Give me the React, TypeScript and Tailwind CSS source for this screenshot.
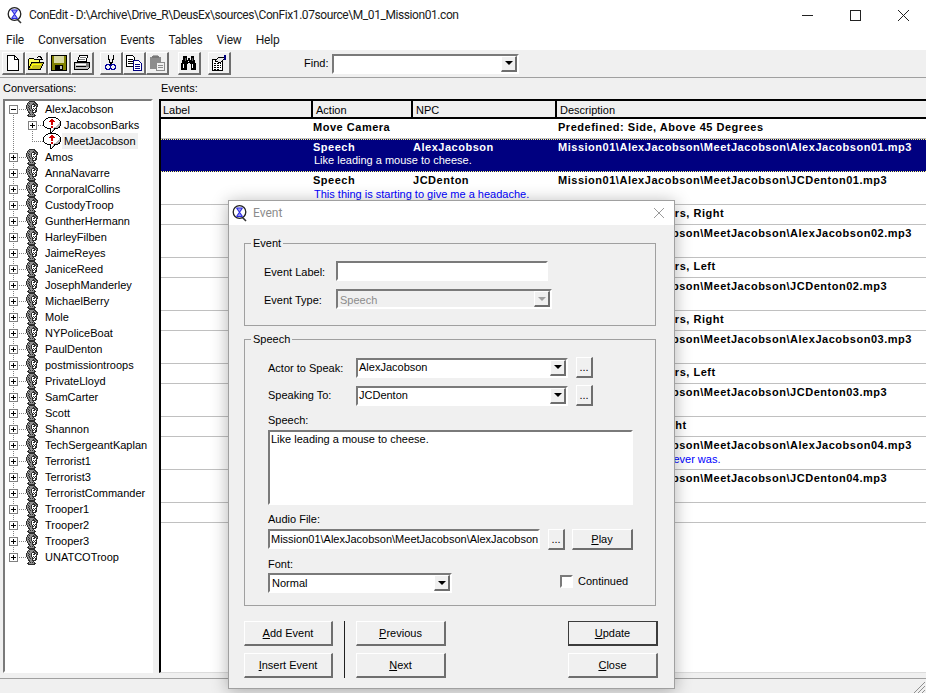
import type { ReactNode } from "react";

const sunken = "border-2 border-t-[#7a7a7a] border-l-[#7a7a7a] border-r-white border-b-white";
const raised = "border border-t-white border-l-white border-r-2 border-b-2 border-r-[#6e6e6e] border-b-[#6e6e6e] bg-[#f0f0f0]";

const actors = [
  "Amos", "AnnaNavarre", "CorporalCollins", "CustodyTroop", "GuntherHermann", "HarleyFilben", "JaimeReyes",
  "JaniceReed", "JosephManderley", "MichaelBerry", "Mole", "NYPoliceBoat", "PaulDenton", "postmissiontroops",
  "PrivateLloyd", "SamCarter", "Scott", "Shannon", "TechSergeantKaplan", "Terrorist1", "Terrorist3",
  "TerroristCommander", "Trooper1", "Trooper2", "Trooper3", "UNATCOTroop",
];

const base = "Mission01\\AlexJacobson\\MeetJacobson\\";

interface EventRow {
  action: string;
  npc?: string;
  desc: string;
  line?: string;
  selected?: boolean;
}

const rows: EventRow[] = [
  { action: "Move Camera", desc: "Predefined: Side, Above 45 Degrees" },
  { action: "Speech", npc: "AlexJacobson", desc: base + "AlexJacobson01.mp3", line: "Like leading a mouse to cheese.", selected: true },
  { action: "Speech", npc: "JCDenton", desc: base + "JCDenton01.mp3", line: "This thing is starting to give me a headache." },
  { action: "Move Camera", desc: "Predefined: Shoulders, Right" },
  { action: "Speech", npc: "AlexJacobson", desc: base + "AlexJacobson02.mp3", line: " " },
  { action: "Move Camera", desc: "Predefined: Shoulders, Left" },
  { action: "Speech", npc: "JCDenton", desc: base + "JCDenton02.mp3", line: " " },
  { action: "Move Camera", desc: "Predefined: Shoulders, Right" },
  { action: "Speech", npc: "AlexJacobson", desc: base + "AlexJacobson03.mp3", line: " " },
  { action: "Move Camera", desc: "Predefined: Shoulders, Left" },
  { action: "Speech", npc: "JCDenton", desc: base + "JCDenton03.mp3", line: " " },
  { action: "Move Camera", desc: "Predefined: Top, Right" },
  { action: "Speech", npc: "AlexJacobson", desc: base + "AlexJacobson04.mp3", line: "You're more comfortable with your nano-augmentations than your brother ever was." },
  { action: "Speech", npc: "JCDenton", desc: base + "JCDenton04.mp3", line: " " },
  { action: "End", desc: "" },
];

function Pixels({ map, colors }: { map: string[]; colors: Record<string, string> }) {
  return (
    <svg width={map[0].length} height={map.length} shapeRendering="crispEdges" className="shrink-0">
      {map.flatMap((line, y) =>
        line.split("").map((c, x) => (colors[c] ? <rect key={x + "-" + y} x={x} y={y} width={1} height={1} fill={colors[c]} /> : null)),
      )}
    </svg>
  );
}

const headMap = [
  "...kkkkkk....",
  "..kgggggkk...",
  ".kgkgggkgkk..",
  ".kggggkkkgkk.",
  "kgkggkwwkkgk.",
  "kggkgkwkkwkk.",
  "kgkggkwwwwk..",
  "kggkgkwkwkk..",
  ".kgkggkwkwk..",
  ".kggkgkkwkk..",
  "..kgggkwwkk..",
  "..kkggkkkk...",
  "...kgggk.....",
  "..kgkgkgk....",
  ".kkgggggkk...",
  "..kkkkkkk....",
];
const headColors = { k: "#2e2e2e", g: "#8c8c8c", w: "#ffffff" };

const bubbleMap = [
  ".....kkkkkkkk.....",
  "...kkwwwwwwwwkk...",
  "..kwwwwwrrwwwwwk..",
  ".kwwwwwrrrrwwwwwk.",
  "kwwwwwrrrrrrwwwwwk",
  "kwwwwwwwrrwwwwwwsk",
  "kwwwwwwwrrwwwwwwsk",
  "kwwwwwwwrrwwwwwssk",
  "kwwwwwwwwwwwwwsssk",
  ".kwwwwwwrrwwwsssk.",
  "..kkwwwwrrwsssskk.",
  "....kkkkwwskkkk...",
  ".......kwwsk......",
  ".......kwsk.......",
  ".......kwk........",
  ".......kk.........",
];
const bubbleColors = { k: "#000000", w: "#ffffff", r: "#d00000", s: "#b8b8b8" };

function AppIcon() {
  return (
    <svg width="17" height="17" viewBox="0 0 17 17">
      <circle cx="7.5" cy="7" r="6.3" fill="#fff" stroke="#222" strokeWidth="1.3" />
      <path d="M4.5 3h6L7.5 7zM7.5 7l-3 4.5h6z" fill="#9a9af5" />
      <path d="M4.5 3h6M4.5 3l6 8.5M10.5 3l-6 8.5M4.5 11.5h6" fill="none" stroke="#2a2ae0" strokeWidth="1.1" />
      <path d="M10.5 12.5 14 16" stroke="#333" strokeWidth="1.6" />
    </svg>
  );
}

function ToolIcon({ children }: { children: ReactNode }) {
  return (
    <svg width="16" height="16" viewBox="0 0 16 16" shapeRendering="crispEdges">
      {children}
    </svg>
  );
}

const toolIcons: Record<string, ReactNode> = {
  new: (
    <ToolIcon>
      <path d="M2.5 .5h7l4 4v11h-11z" fill="#fff" stroke="#000" />
      <path d="M9.5 .5v4h4" fill="none" stroke="#000" />
    </ToolIcon>
  ),
  open: (
    <ToolIcon>
      <path d="M.5 14.5v-10l1-1h4l1 1h5v3" fill="#ffff60" stroke="#000" />
      <path d="M.5 14.5l3-7h12l-3 7z" fill="#c8c020" stroke="#000" />
      <path d="M3 13l2-4h8" stroke="#ffff00" fill="none" />
      <path d="M9 3V2h1V1h3v1h1v2h1v1h-4V4h2V3h-1V2h-2v1z" fill="#000" />
    </ToolIcon>
  ),
  save: (
    <ToolIcon>
      <rect x="0" y="0" width="16" height="16" fill="#000" />
      <rect x="1" y="1" width="14" height="14" fill="#808000" />
      <rect x="3" y="1" width="10" height="7" fill="#d8d8a0" />
      <rect x="4" y="10" width="8" height="5" fill="#000" />
      <rect x="9" y="11" width="2" height="3" fill="#c0c0c0" />
    </ToolIcon>
  ),
  print: (
    <ToolIcon>
      <path d="M5.5 .5h8l-1 6h-9z" fill="#fff" stroke="#000" />
      <path d="M6 2h6M5 4h6" stroke="#808080" />
      <path d="M.5 7.5h15v5l-2 2h-13z" fill="#c0c0c0" stroke="#000" />
      <path d="M2 9h11" stroke="#fff" />
      <path d="M2 11h10" stroke="#000" />
      <path d="M12 8h3v4h-3z" fill="#808080" />
    </ToolIcon>
  ),
  cut: (
    <ToolIcon>
      <path d="M5 0h1v4h1v3h2V4h1V0h1v5h-1v3H9v2H7V8H6V5H5z" fill="#000" />
      <path d="M5.5 9.5h1v1h1v3h-1v1h-3v-1h-1v-3h1v-1z" fill="none" stroke="#0000a0" />
      <path d="M9.5 9.5h2v1h1v3h-1v1h-3v-1h-1v-3h1v-1z" fill="none" stroke="#0000a0" />
    </ToolIcon>
  ),
  copy: (
    <ToolIcon>
      <path d="M.5 .5h6l2 2v9h-8z" fill="#fff" stroke="#000" />
      <path d="M2 4h5M2 6h5M2 8h5" stroke="#000" />
      <path d="M7.5 5.5h5l3 3v7h-8z" fill="#fff" stroke="#000080" />
      <path d="M9 9h5M9 11h5M9 13h5" stroke="#000080" />
    </ToolIcon>
  ),
  paste: (
    <ToolIcon>
      <path d="M1 2h11v12H1z" fill="#8c8c8c" />
      <path d="M4 0h5v3H4z" fill="#a8a8a8" />
      <path d="M3 1h7v2H3z" fill="#777" />
      <path d="M7.5 7.5h8v8h-8z" fill="#f0f0f0" stroke="#8c8c8c" />
      <path d="M9 10h5M9 12h5" stroke="#8c8c8c" />
    </ToolIcon>
  ),
  find: (
    <ToolIcon>
      <path d="M3 1h3v4h1V3h2v2h1V1h3v4h1v3h1v7H10V9H9V8H7v1H6v6H0V8h1V5h1V1z" fill="#000" />
      <path d="M2 9h1v4H2zM11 9h1v4h-1zM7 6h1v1H7z" fill="#fff" />
      <path d="M4 3h1v3H4zM11 3h1v3h-1z" fill="#606060" />
    </ToolIcon>
  ),
  props: (
    <ToolIcon>
      <path d="M1.5 4.5h10v11h-10z" fill="#fff" stroke="#000" />
      <path d="M3 8h7M3 10h7M3 12h7M3 14h5" stroke="#000" strokeDasharray="2 1" />
      <path d="M4 6l4-4h3l3 1-4 4H7z" fill="#e8e8e8" stroke="#000" />
      <path d="M13 0h2v5h-2z" fill="#000080" />
    </ToolIcon>
  ),
};

function ToolButton({ name }: { name: string }) {
  return <div className={`w-[23px] h-[23px] flex items-center justify-center ${raised}`}>{toolIcons[name]}</div>;
}

function ArrowBox({ disabled }: { disabled?: boolean }) {
  return (
    <div className={`w-[16px] h-full flex items-center justify-center ${raised}`}>
      <div
        className={`w-0 h-0 border-l-[4px] border-r-[4px] border-t-[4px] border-l-transparent border-r-transparent ${
          disabled ? "border-t-[#a0a0a0]" : "border-t-black"
        }`}
      />
    </div>
  );
}

function Combo({ value, width, disabled, textClass }: { value: string; width: string; disabled?: boolean; textClass?: string }) {
  return (
    <div className={`${width} h-[20px] flex items-stretch justify-between ${sunken} ${disabled ? "bg-[#f0f0f0] text-[#8c8c8c]" : "bg-white"}`}>
      <span className={textClass ?? "pl-[1px] leading-[15px]"}>{value}</span>
      <ArrowBox disabled={disabled} />
    </div>
  );
}

function DotsButton() {
  return <div className={`w-[17px] h-[21px] flex items-center justify-center ${raised}`}>...</div>;
}

function Button({ k, rest, wide, isDefault }: { k: string; rest: string; wide?: boolean; isDefault?: boolean }) {
  return (
    <div
      className={`${wide ? "w-[90px]" : "w-[89px]"} h-[25px] flex items-center justify-center ${
        isDefault ? "border border-[#3c3c3c] border-r-2 border-b-2 bg-[#f0f0f0]" : raised
      }`}
    >
      <span>
        <u>{k}</u>
        {rest}
      </span>
    </div>
  );
}

function Connector({ first, last, child, lastChild, open }: { first?: boolean; last?: boolean; child?: boolean; lastChild?: boolean; open?: boolean }) {
  // tree lines and the plus / minus box, drawn in one strip
  const w = child ? 38 : 21;
  const boxX = child ? 23 : 4;
  const cx = boxX + 4;
  return (
    <svg width={w} height="16" shapeRendering="crispEdges" className="shrink-0">
      {child ? (
        <>
          <path d="M8.5 0v16" stroke="#808080" strokeDasharray="1 1" />
          <path d={lastChild ? "M27.5 0v8" : "M27.5 0v16"} stroke="#808080" strokeDasharray="1 1" />
          <path d="M27 8.5h11" stroke="#808080" strokeDasharray="1 1" />
          {!lastChild && (
            <>
              <rect x={boxX + 0.5} y="4.5" width="8" height="8" fill="#fff" stroke="#808080" />
              <path d={`M${boxX + 2} 8.5h5M${cx + 0.5} 6v5`} stroke="#000" />
            </>
          )}
        </>
      ) : (
        <>
          <path d={first ? "M8.5 8v8" : last ? "M8.5 0v8" : "M8.5 0v16"} stroke="#808080" strokeDasharray="1 1" />
          <path d="M8 8.5h13" stroke="#808080" strokeDasharray="1 1" />
          <rect x={boxX + 0.5} y="4.5" width="8" height="8" fill="#fff" stroke="#808080" />
          <path d={open ? `M${boxX + 2} 8.5h5` : `M${boxX + 2} 8.5h5M${cx + 0.5} 6v5`} stroke="#000" />
        </>
      )}
    </svg>
  );
}

function ActorNode({ name, first, last, open }: { name: string; first?: boolean; last?: boolean; open?: boolean }) {
  return (
    <div className="h-[16px] flex items-center">
      <Connector first={first} last={last} open={open} />
      <Pixels map={headMap} colors={headColors} />
      <span className="ml-[6px] leading-[16px] whitespace-nowrap">{name}</span>
    </div>
  );
}

function ConvNode({ name, last, active }: { name: string; last?: boolean; active?: boolean }) {
  return (
    <div className="h-[16px] flex items-center">
      <Connector child lastChild={last} />
      <Pixels map={bubbleMap} colors={bubbleColors} />
      <span className={`ml-[1px] px-[2px] leading-[16px] whitespace-nowrap ${active ? "bg-[#f0f0f0]" : ""}`}>{name}</span>
    </div>
  );
}

function GroupBox({ title, h, className, children }: { title: string; h: string; className?: string; children: ReactNode }) {
  return (
    <div className={`relative w-[412px] ${h} border border-[#a0a0a0] ${className ?? ""}`}>
      <span className="absolute -top-[8px] left-[6px] bg-[#f0f0f0] px-[2px] leading-[14px]">{title}</span>
      {children}
    </div>
  );
}

function EventDialog() {
  return (
    <div className="absolute left-[228px] top-[200px] w-[447px] h-[489px] border border-[#a0a0a0] bg-[#f0f0f0] shadow-[0_2px_16px_rgba(0,0,0,0.3)]">
      <div className="h-[24px] bg-white flex items-center pl-[3px] pr-[9px] justify-between">
        <div className="flex items-center">
          <AppIcon />
          <span className="ml-[4px] text-[12px] text-[#8c8c8c] font-['Roboto',sans-serif]">Event</span>
        </div>
        <svg width="12" height="12" viewBox="0 0 12 12">
          <path d="M1 1l10 10M11 1 1 11" stroke="#9a9a9a" strokeWidth="1" />
        </svg>
      </div>
      <div className="pl-[15px] pt-[18px]">
        <GroupBox title="Event" h="h-[83px]" className="pl-[19px] pt-[17px]">
          <div className="flex items-center">
            <span className="w-[72px] pt-[2px]">Event Label:</span>
            <div className={`w-[212px] h-[20px] bg-white ${sunken}`} />
          </div>
          <div className="flex items-center mt-[8px]">
            <span className="w-[72px] pt-[2px]">Event Type:</span>
            <Combo value="Speech" width="w-[216px]" disabled textClass="pl-[2px] leading-[18px]" />
          </div>
        </GroupBox>
        <GroupBox title="Speech" h="h-[267px]" className="mt-[13px] pl-[23px] pt-[17px]">
          <div className="flex items-center">
            <span className="w-[88px] pt-[2px]">Actor to Speak:</span>
            <Combo value="AlexJacobson" width="w-[212px]" />
            <div className="ml-[8px]">
              <DotsButton />
            </div>
          </div>
          <div className="flex items-center mt-[7px]">
            <span className="w-[88px]">Speaking To:</span>
            <Combo value="JCDenton" width="w-[212px]" />
            <div className="ml-[8px]">
              <DotsButton />
            </div>
          </div>
          <div className="mt-[7px] mb-[2px] leading-[15px]">Speech:</div>
          <div className={`w-[365px] h-[75px] bg-white pl-[1px] leading-[15px] ${sunken}`}>Like leading a mouse to cheese.</div>
          <div className="mt-[7px] mb-[2px] leading-[15px]">Audio File:</div>
          <div className="flex items-start">
            <div className={`w-[272px] h-[20px] bg-white pl-[1px] leading-[16px] overflow-hidden whitespace-nowrap ${sunken}`}>
              Mission01\AlexJacobson\MeetJacobson\AlexJacobson01.mp3
            </div>
            <div className="ml-[8px]">
              <DotsButton />
            </div>
            <div className={`ml-[7px] w-[61px] h-[21px] flex items-center justify-center ${raised}`}>
              <span>
                <u>P</u>lay
              </span>
            </div>
          </div>
          <div className="mt-[7px] mb-[1px] leading-[15px]">Font:</div>
          <div className="flex items-start">
            <Combo value="Normal" width="w-[184px]" textClass="pl-[2px] leading-[16px]" />
            <div className={`ml-[108px] mt-[2px] w-[13px] h-[13px] bg-white ${sunken}`} />
            <span className="ml-[5px] mt-[1px] leading-[15px]">Continued</span>
          </div>
        </GroupBox>
        <div className="flex mt-[15px]">
          <div className="flex flex-col gap-[7px]">
            <Button k="A" rest="dd Event" />
            <Button k="I" rest="nsert Event" />
          </div>
          <div className="w-[1px] h-[57px] bg-[#202020] ml-[11px]" />
          <div className="flex flex-col gap-[7px] ml-[11px]">
            <Button k="P" rest="revious" wide />
            <Button k="N" rest="ext" wide />
          </div>
          <div className="flex flex-col gap-[7px] ml-[122px]">
            <Button k="U" rest="pdate" wide isDefault />
            <Button k="C" rest="lose" wide />
          </div>
        </div>
      </div>
    </div>
  );
}

export default function App() {
  return (
    <div className="relative w-[926px] h-[693px] overflow-hidden bg-[#f0f0f0] text-black text-[11px] font-['Liberation_Sans',Arial,sans-serif]">
      {/* Title bar */}
      <div className="h-[30px] bg-white flex items-center justify-between">
        <div className="flex items-center pl-[7px]">
          <AppIcon />
          <span className="ml-[5px] text-[12px] tracking-[-0.42px] font-['Roboto',sans-serif] text-[#1a1a1a]">
            ConEdit - D:\Archive\Drive_R\DeusEx\sources\ConFix1.07source\M_01_Mission01.con
          </span>
        </div>
        <div className="flex items-center pr-[17px] gap-[37px]">
          <div className="w-[11px] h-[1px] bg-[#222]" />
          <div className="w-[11px] h-[11px] border border-[#222]" />
          <svg width="11" height="11" viewBox="0 0 11 11">
            <path d="M0 0l11 11M11 0 0 11" stroke="#222" strokeWidth="1" />
          </svg>
        </div>
      </div>

      {/* Menu bar */}
      <div className="h-[20px] bg-white flex items-center pl-[6px] gap-[14px] text-[12px] tracking-[-0.2px] font-['Roboto',sans-serif] text-[#1a1a1a]">
        {["File", "Conversation", "Events", "Tables", "View", "Help"].map((m) => (
          <span key={m}>{m}</span>
        ))}
      </div>

      {/* Toolbar */}
      <div className="h-[28px] border-b border-b-[#a0a0a0] flex items-center pl-[2px]">
        <ToolButton name="new" />
        <ToolButton name="open" />
        <ToolButton name="save" />
        <ToolButton name="print" />
        <div className="w-[6px]" />
        <ToolButton name="cut" />
        <ToolButton name="copy" />
        <ToolButton name="paste" />
        <div className="w-[9px]" />
        <ToolButton name="find" />
        <div className="w-[7px]" />
        <ToolButton name="props" />
        <span className="ml-[73px] w-[28px]">Find:</span>
        <div className={`w-[187px] h-[20px] flex justify-end bg-white ${sunken}`}>
          <ArrowBox />
        </div>
      </div>

      {/* Panel captions */}
      <div className="h-[21px] flex items-center pl-[3px]">
        <span className="w-[158px]">Conversations:</span>
        <span>Events:</span>
      </div>

      {/* Tree and list */}
      <div className="flex h-[574px] pl-[3px]">
        <div className={`w-[150px] bg-white ${sunken}`}>
          <ActorNode name="AlexJacobson" first open />
          <ConvNode name="JacobsonBarks" />
          <ConvNode name="MeetJacobson" last active />
          {actors.map((a, i) => (
            <ActorNode key={a} name={a} last={i === actors.length - 1} />
          ))}
        </div>
        <div className="ml-[6px] flex-1 bg-white border-l-2 border-t-2 border-b border-l-black border-t-black border-b-[#dcdcdc] overflow-hidden">
          <div className="h-[18px] flex border-b-2 border-b-black bg-[#f0f0f0] leading-[19px]">
            <div className="w-[152px] pl-[2px] border-r-2 border-r-black">Label</div>
            <div className="w-[100px] pl-[3px] border-r-2 border-r-black">Action</div>
            <div className="w-[144px] pl-[3px] border-r-2 border-r-black">NPC</div>
            <div className="flex-1 pl-[3px]">Description</div>
          </div>
          {rows.map((r, i) => (
            <div
              key={i}
              className={`flex flex-col border-b ${r.line ? "h-[33px]" : "h-[20px]"} ${
                r.selected
                  ? "bg-[#000080] text-white border-dotted border-t border-b-[#ffff80] border-t-[#ffff80]"
                  : "border-b-[#c0c0c0]"
              }`}
            >
              <div className={`flex font-bold tracking-[0.52px] leading-[15px] whitespace-nowrap ${r.selected ? "" : "pt-[1px]"}`}>
                <span className="w-[152px]" />
                <span className="w-[100px]">{r.action}</span>
                <span className="w-[144px]">{r.npc}</span>
                <span className="pl-[1px]">{r.desc}</span>
              </div>
              {r.line && (
                <div className={`pl-[153px] leading-[13px] whitespace-nowrap ${r.selected ? "text-white -mt-[1px]" : "text-[#0000ff]"}`}>{r.line}</div>
              )}
            </div>
          ))}
        </div>
      </div>

      {/* Status bar */}
      <div className="mt-[5px] h-[15px] border-t border-t-[#a0a0a0] flex justify-end items-end">
        <svg width="14" height="13" viewBox="0 0 14 13">
          <path d="M13 2 2 13M13 6l-7 7M13 10l-3 3" stroke="#909090" strokeWidth="1" />
        </svg>
      </div>

      <EventDialog />
    </div>
  );
}
